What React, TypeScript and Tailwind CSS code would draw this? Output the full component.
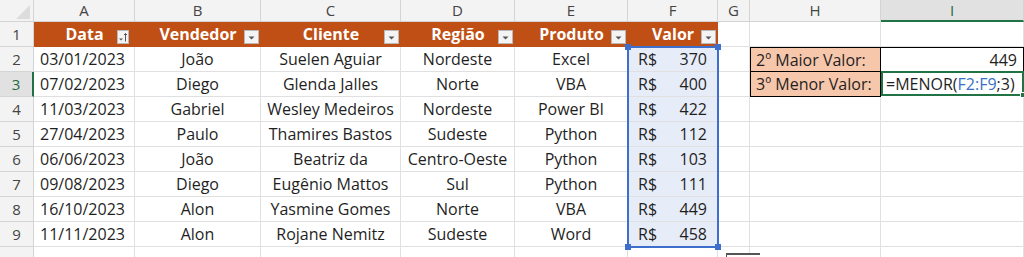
import React from "react";

type Row = [string, string, string, string, string, number];

const rows: Row[] = [
  ["03/01/2023", "João", "Suelen Aguiar", "Nordeste", "Excel", 370],
  ["07/02/2023", "Diego", "Glenda Jalles", "Norte", "VBA", 400],
  ["11/03/2023", "Gabriel", "Wesley Medeiros", "Nordeste", "Power BI", 422],
  ["27/04/2023", "Paulo", "Thamires Bastos", "Sudeste", "Python", 112],
  ["06/06/2023", "João", "Beatriz da", "Centro-Oeste", "Python", 103],
  ["09/08/2023", "Diego", "Eugênio Mattos", "Sul", "Python", 111],
  ["16/10/2023", "Alon", "Yasmine Gomes", "Norte", "VBA", 449],
  ["11/11/2023", "Alon", "Rojane Nemitz", "Sudeste", "Word", 458],
];

const letters = ["A", "B", "C", "D", "E", "F", "G", "H", "I"];
const headers = ["Data", "Vendedor", "Cliente", "Região", "Produto", "Valor"];

// Botão de filtro da tabela
function FilterButton({ sort }: { sort?: boolean }) {
  return (
    <div
      className={
        "absolute top-[8px] h-[14px] bg-[#f4f4f4] border border-[#b9b9b9] " +
        (sort ? "right-[6px] w-[12px]" : "right-[2px] w-[15px]")
      }
    >
      {sort ? (
        <svg width="12" height="14" viewBox="0 0 12 14" className="absolute -left-px -top-px">
          <path d="M2 8.5h4L4 10.5z" fill="#555" />
          <path d="M8.5 11.5V3.5M7 5l1.5-1.5L10 5" stroke="#555" strokeWidth="1" fill="none" />
        </svg>
      ) : (
        <svg width="15" height="14" viewBox="0 0 15 14" className="absolute -left-px -top-px">
          <path d="M4.5 6.5h6L7.5 9.5z" fill="#555" />
        </svg>
      )}
    </div>
  );
}

const cell = "h-[25px] border-r border-b border-[#e0e0e0] flex items-center whitespace-nowrap";

export default function App() {
  return (
    <div
      className="relative w-[1024px] h-[257px] overflow-hidden bg-white text-[16px] text-[#1f1f1f]"
      style={{ fontFamily: '"Open Sans", "Noto Sans", sans-serif' }}
    >
      <div className="grid grid-cols-[34px_101px_126px_140px_114px_113px_90px_32px_131px_143px]">
        {/* Cabeçalho de colunas */}
        <div className="relative h-[22px] bg-[#f3f3f3] border-r border-b border-[#d4d4d4]">
          <svg width="34" height="22" className="absolute left-0 top-0">
            <path d="M30 5 L30 19 L16 19 Z" fill="#dcdcdc" />
          </svg>
        </div>
        {letters.map((l) => (
          <div
            key={l}
            className={
              "h-[22px] flex items-center justify-center text-[15px] border-r " +
              (l === "I"
                ? "bg-[#e1e1e1] text-[#1e6b41] border-b-2 border-b-[#217346] border-r-[#d4d4d4]"
                : "bg-[#f3f3f3] text-[#444] border-b border-[#d4d4d4]")
            }
          >
            {l}
          </div>
        ))}

        {/* Linha 1: cabeçalho da tabela */}
        <div className="h-[25px] bg-[#f3f3f3] border-r border-b border-[#d4d4d4] flex items-center justify-center text-[15px] text-[#444]">
          1
        </div>
        {headers.map((h, i) => (
          <div
            key={h}
            className="relative h-[25px] bg-[#c04f15] border-b border-[#c04f15] flex items-center justify-center font-bold text-white"
          >
            {h}
            <FilterButton sort={i === 0} />
          </div>
        ))}
        <div className={cell} />
        <div className={cell} />
        <div className={cell} />

        {/* Linhas de dados */}
        {rows.map((r, i) => {
          const n = i + 2;
          return (
            <React.Fragment key={n}>
              <div
                className={
                  "h-[25px] flex items-center justify-center text-[15px] border-b border-[#d4d4d4] " +
                  (n === 3
                    ? "bg-[#e1e1e1] text-[#1e6b41] border-r-2 border-r-[#217346]"
                    : "bg-[#f3f3f3] text-[#444] border-r border-r-[#d4d4d4]")
                }
              >
                {n}
              </div>
              <div className={cell + " pl-[6px]"}>{r[0]}</div>
              <div className={cell + " justify-center"}>{r[1]}</div>
              <div className={cell + " justify-center"}>{r[2]}</div>
              <div className={cell + " justify-center"}>{r[3]}</div>
              <div className={cell + " justify-center"}>{r[4]}</div>
              <div className={cell + " justify-between px-[10px] bg-[#e7edf8]"}>
                <span>R$</span>
                <span>{r[5]}</span>
              </div>
              <div className={cell} />
              {n === 2 && (
                <>
                  <div className="h-[25px] flex items-center pl-[5px] bg-[#f7c7ac] border border-black">
                    2º Maior Valor:
                  </div>
                  <div className="h-[25px] flex items-center justify-end pr-[6px] border-t border-r border-b border-black">
                    449
                  </div>
                </>
              )}
              {n === 3 && (
                <>
                  <div className="h-[25px] flex items-center pl-[5px] bg-[#f7c7ac] border-l border-r border-b border-black">
                    3º Menor Valor:
                  </div>
                  <div className="relative h-[25px] flex items-center pl-[3px] whitespace-nowrap border-2 border-[#217346] -mt-px">
                    =MENOR(<span className="text-[#3a6fc6]">F2:F9</span>;3)
                    <div className="absolute -right-[4px] -bottom-[4px] w-[6px] h-[6px] bg-[#217346] border border-white" />
                  </div>
                </>
              )}
              {n > 3 && (
                <>
                  <div className={cell} />
                  <div className={cell} />
                </>
              )}
            </React.Fragment>
          );
        })}

        {/* Linha 10 (parcial) */}
        <div className="h-[25px] bg-[#f3f3f3] border-r border-[#d4d4d4]" />
        {letters.map((l) => (
          <div key={"r10" + l} className={cell} />
        ))}
      </div>

      {/* Seleção F2:F9 */}
      <div className="absolute left-[627px] top-[46px] w-[92px] h-[202px] border-2 border-[#3f6fcc] pointer-events-none">
        <div className="absolute -left-[4px] -top-[4px] w-[6px] h-[6px] bg-[#3f6fcc]" />
        <div className="absolute -right-[4px] -top-[4px] w-[6px] h-[6px] bg-[#3f6fcc]" />
        <div className="absolute -left-[4px] -bottom-[4px] w-[6px] h-[6px] bg-[#3f6fcc]" />
        <div className="absolute -right-[4px] -bottom-[4px] w-[6px] h-[6px] bg-[#3f6fcc]" />
      </div>

      {/* Borda da dica de fórmula */}
      <div className="absolute left-[726px] top-[253px] w-[34px] h-[10px] bg-white border-t-2 border-l border-[#555]" />
    </div>
  );
}
